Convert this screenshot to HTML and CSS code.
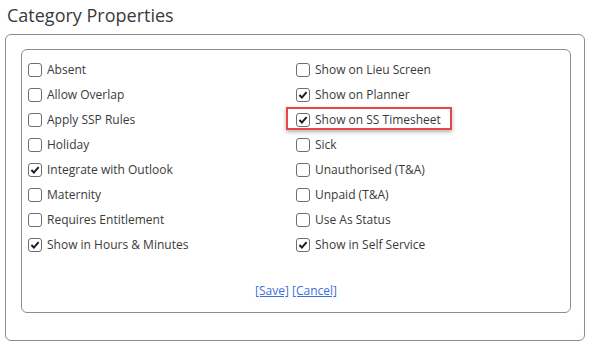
FILE: index.html
```html
<!DOCTYPE html>
<html>
<head>
<meta charset="utf-8">
<link rel="stylesheet" href="styles.css">
</head>
<body>
<h1 class="title">Category Properties</h1>
<div class="outer">
  <div class="inner">
    <div class="grid">
      <label class="item"><span class="box"></span>Absent</label>
      <label class="item"><span class="box"></span>Show on Lieu Screen</label>
      <label class="item"><span class="box"></span>Allow Overlap</label>
      <label class="item"><span class="box checked"><svg viewBox="0 0 13 13"><path d="M2.6 6.6 L5.3 9.3 L10.4 3.4"/></svg></span>Show on Planner</label>
      <label class="item"><span class="box"></span>Apply SSP Rules</label>
      <label class="item highlight"><span class="box checked"><svg viewBox="0 0 13 13"><path d="M2.6 6.6 L5.3 9.3 L10.4 3.4"/></svg></span>Show on SS Timesheet</label>
      <label class="item"><span class="box"></span>Holiday</label>
      <label class="item"><span class="box"></span>Sick</label>
      <label class="item"><span class="box checked"><svg viewBox="0 0 13 13"><path d="M2.6 6.6 L5.3 9.3 L10.4 3.4"/></svg></span>Integrate with Outlook</label>
      <label class="item"><span class="box"></span>Unauthorised (T&amp;A)</label>
      <label class="item"><span class="box"></span>Maternity</label>
      <label class="item"><span class="box"></span>Unpaid (T&amp;A)</label>
      <label class="item"><span class="box"></span>Requires Entitlement</label>
      <label class="item"><span class="box"></span>Use As Status</label>
      <label class="item"><span class="box checked"><svg viewBox="0 0 13 13"><path d="M2.6 6.6 L5.3 9.3 L10.4 3.4"/></svg></span>Show in Hours &amp; Minutes</label>
      <label class="item"><span class="box checked"><svg viewBox="0 0 13 13"><path d="M2.6 6.6 L5.3 9.3 L10.4 3.4"/></svg></span>Show in Self Service</label>
    </div>
    <div class="actions"><a href="#">[Save]</a> <a href="#">[Cancel]</a></div>
  </div>
</div>
</body>
</html>
```
FILE: styles.css
```css
html, body {
  margin: 0;
  padding: 0;
  background: #fff;
}
body {
  padding: 0 6px 0 5px;
  font-family: "Open Sans", "Noto Sans", sans-serif;
  color: #3a3a3a;
}
.title {
  margin: 0 0 0 2px;
  height: 34px;
  font-size: 18px;
  font-weight: normal;
  line-height: 30px;
  color: #3a3a3a;
}
.outer {
  box-sizing: border-box;
  height: 307px;
  border: 1px solid #8a8d91;
  border-radius: 6px;
  padding: 14px 13px 0 15px;
}
.inner {
  box-sizing: border-box;
  height: 264px;
  border: 1px solid #8a8d91;
  border-radius: 6px;
  padding: 7px 6px 0 6px;
}
.grid {
  display: grid;
  grid-template-columns: 268px 1fr;
  grid-auto-rows: 25px;
}
.item {
  display: flex;
  align-items: center;
  font-size: 12px;
  position: relative;
  white-space: nowrap;
}
.box {
  box-sizing: border-box;
  width: 14px;
  height: 14px;
  border: 1px solid #6b6e72;
  border-radius: 3px;
  margin-right: 5px;
  display: flex;
  align-items: center;
  justify-content: center;
  flex: none;
}
.box svg {
  width: 12px;
  height: 12px;
}
.box svg path {
  fill: none;
  stroke: #1e1e1e;
  stroke-width: 2.2;
}
.highlight::before {
  content: "";
  position: absolute;
  left: -10px;
  top: 0;
  width: 166px;
  height: 23px;
  box-sizing: border-box;
  border: 2px solid #e8474a;
  box-shadow: 0 2px 4px rgba(0, 0, 0, 0.3);
}
.actions {
  margin-top: 25px;
  text-align: center;
  font-size: 12px;
}
.actions a {
  color: #3b6fd6;
  text-decoration: underline;
}
```
